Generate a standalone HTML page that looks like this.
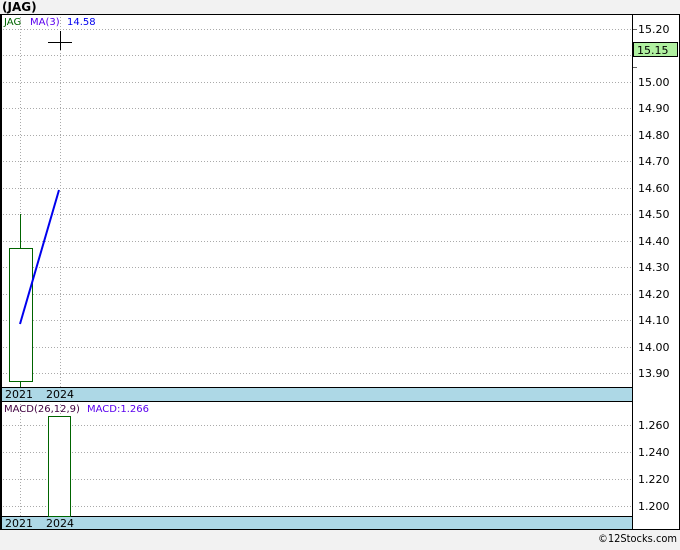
<!DOCTYPE html>
<html><head><style>
body{margin:0;width:680px;height:546px;background:#f2f2f2;overflow:hidden;font-family:"DejaVu Sans","Liberation Sans",sans-serif}
</style></head><body>
<svg width="680" height="546" xmlns="http://www.w3.org/2000/svg" font-family="DejaVu Sans, Liberation Sans, sans-serif">
<rect x="0" y="0" width="680" height="546" fill="#f2f2f2"/>
<text x="2" y="11" font-size="12" font-weight="bold" fill="#000">(JAG)</text>
<rect x="0" y="14" width="680" height="516" fill="#fff"/>
<g stroke="#aaa" stroke-dasharray="1,2" stroke-width="1">
<line x1="0" x2="632" y1="29.5" y2="29.5"/><line x1="0" x2="632" y1="55.5" y2="55.5"/><line x1="0" x2="632" y1="82.5" y2="82.5"/><line x1="0" x2="632" y1="108.5" y2="108.5"/><line x1="0" x2="632" y1="135.5" y2="135.5"/><line x1="0" x2="632" y1="161.5" y2="161.5"/><line x1="0" x2="632" y1="188.5" y2="188.5"/><line x1="0" x2="632" y1="214.5" y2="214.5"/><line x1="0" x2="632" y1="241.5" y2="241.5"/><line x1="0" x2="632" y1="267.5" y2="267.5"/><line x1="0" x2="632" y1="294.5" y2="294.5"/><line x1="0" x2="632" y1="320.5" y2="320.5"/><line x1="0" x2="632" y1="347.5" y2="347.5"/><line x1="0" x2="632" y1="373.5" y2="373.5"/>
<line x1="0" x2="632" y1="425.5" y2="425.5"/><line x1="0" x2="632" y1="452.5" y2="452.5"/><line x1="0" x2="632" y1="479.5" y2="479.5"/><line x1="0" x2="632" y1="506.5" y2="506.5"/>
<line x1="20.5" x2="20.5" y1="14" y2="530"/><line x1="60.5" x2="60.5" y1="14" y2="530"/>
</g>
<g stroke="#666"><line x1="632" x2="637" y1="29.5" y2="29.5"/><line x1="632" x2="637" y1="67.5" y2="67.5"/></g>
<rect x="0" y="387" width="632" height="14" fill="#add8e6"/>
<rect x="0" y="516" width="632" height="14" fill="#add8e6"/>
<g stroke="#000" stroke-width="1" fill="none">
<rect x="0.5" y="14.5" width="679" height="515"/>
<line x1="1.5" x2="1.5" y1="14" y2="530"/>
<line x1="632.5" x2="632.5" y1="14" y2="530"/>
<line x1="0" x2="632" y1="387.5" y2="387.5"/><line x1="0" x2="632" y1="401.5" y2="401.5"/>
<line x1="0" x2="632" y1="516.5" y2="516.5"/>
</g>
<g stroke="#006400" fill="#fff" stroke-width="1">
<line x1="20.5" x2="20.5" y1="214" y2="387"/>
<rect x="9.5" y="248.5" width="23" height="133"/>
<rect x="48.5" y="416.5" width="22" height="100"/>
</g>
<line x1="20" y1="324" x2="59" y2="190" stroke="#0000ee" stroke-width="2"/>
<g stroke="#000"><line x1="48" x2="72" y1="42.5" y2="42.5"/><line x1="60.5" x2="60.5" y1="31" y2="50"/></g>
<g font-size="10">
<text x="4" y="25" fill="#006400">JAG</text>
<text x="30" y="25" fill="#5a00ee">MA(3)</text>
<text x="67" y="25" fill="#0000ee">14.58</text>
<text x="4" y="412" fill="#400040">MACD(26,12,9)</text>
<text x="87" y="412" fill="#5a00ee">MACD:1.266</text>
<text x="5" y="398" font-size="11" fill="#000">2021</text><text x="46" y="398" font-size="11" fill="#000">2024</text>
<text x="5" y="527" font-size="11" fill="#000">2021</text><text x="46" y="527" font-size="11" fill="#000">2024</text>
</g>
<g font-size="11" fill="#000">
<text x="638" y="33">15.20</text><text x="638" y="86">15.00</text><text x="638" y="112">14.90</text><text x="638" y="139">14.80</text><text x="638" y="165">14.70</text><text x="638" y="192">14.60</text><text x="638" y="218">14.50</text><text x="638" y="245">14.40</text><text x="638" y="271">14.30</text><text x="638" y="298">14.20</text><text x="638" y="324">14.10</text><text x="638" y="351">14.00</text><text x="638" y="377">13.90</text>
<text x="638" y="429">1.260</text><text x="638" y="456">1.240</text><text x="638" y="483">1.220</text><text x="638" y="510">1.200</text>
</g>
<rect x="633.5" y="42.5" width="44" height="14" fill="#b0f0a0" stroke="#000"/>
<text x="637" y="54" font-size="11" fill="#000">15.15</text>
<text x="598" y="542" font-size="11" fill="#000" textLength="79" lengthAdjust="spacingAndGlyphs">©12Stocks.com</text>
</svg>
</body></html>
